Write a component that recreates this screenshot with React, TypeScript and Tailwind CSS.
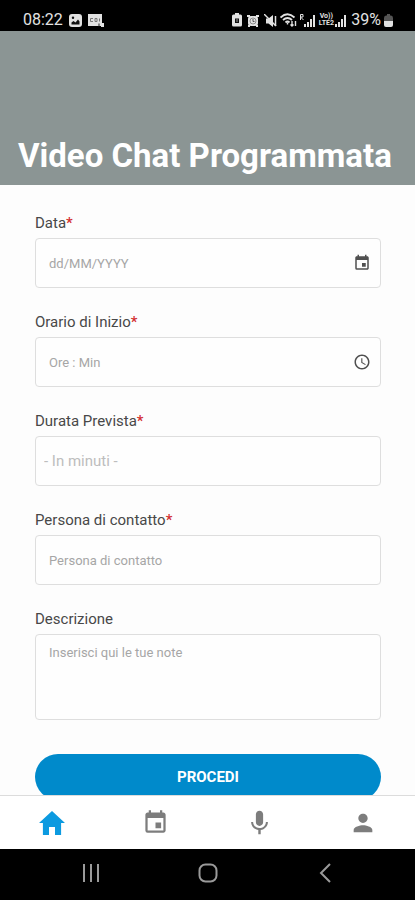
import type { ReactNode } from "react";
import { IoMdHome, IoMdMic } from "react-icons/io";
import { MdEvent, MdPerson, MdSchedule } from "react-icons/md";

const inputClass =
  "h-[50px] w-full rounded border border-[#dedede] bg-[#fefefe] px-[13px] text-[13px] text-[#444] placeholder:text-[#a6a6a6] outline-none";

function Signal() {
  return (
    <svg width="11" height="12" viewBox="0 0 11 12" fill="currentColor" aria-hidden="true">
      <rect x="0" y="9" width="2" height="3" />
      <rect x="3" y="7" width="2" height="5" />
      <rect x="6" y="4" width="2" height="8" />
      <rect x="9" y="0" width="2" height="12" />
    </svg>
  );
}

function StatusBar() {
  return (
    <header className="flex h-[31px] shrink-0 items-end justify-between bg-black pr-[22px] pl-[23px] text-[#e2e2e2]">
      <div className="flex h-[22px] items-center gap-1.5">
        <span className="text-base leading-[22px]">08:22</span>
        <svg width="13" height="13" viewBox="0 0 13 13" aria-hidden="true">
          <rect width="13" height="13" rx="3" fill="currentColor" />
          <path d="M2.500 10.500v-2L4.500 7l2 1.500 2.500-3 1.500 2v3z" fill="#111" />
          <circle cx="4" cy="3.800" r="1.200" fill="#111" />
        </svg>
        <svg width="16" height="13" viewBox="0 0 16 13" aria-hidden="true">
          <path d="M0 0h14v9h2v4h-3v-1H0z" fill="currentColor" />
          <path d="M2.500 7.500v-3h2.500M5 7.500H2.500M7 7.500v-3h2v3zM11.500 4.500v3" fill="none" stroke="#777" />
          <path d="M11 9.500v3" stroke="#222" />
        </svg>
      </div>
      <div className="flex h-[22px] items-center gap-[3px]">
        <div className="flex items-center gap-[5px]">
          <svg width="10" height="14" viewBox="0 0 10 14" aria-hidden="true">
            <path d="M3 0h4v1.500h1.500Q10 1.500 10 3v9q0 1.500-1.500 1.500h-7Q0 13.500 0 12V3q0-1.500 1.500-1.500H3z" fill="currentColor" />
            <path d="M3 5.500h4v4.500H3z" fill="#111" />
            <path d="M5 6v3" stroke="#999" />
          </svg>
          <svg width="12" height="13" viewBox="0 0 12 13" aria-hidden="true">
            <path d="M0 1h3v2H0zM9 1h3v2H9zM1 11h2v2H1zM9 11h2v2H9z" fill="currentColor" />
            <rect x="1" y="2" width="10" height="10" rx="3" fill="currentColor" />
            <circle cx="6" cy="7" r="3" fill="none" stroke="#777" strokeWidth=".8" />
            <path d="M6 5v2.500h1.500" fill="none" stroke="#555" />
          </svg>
          <svg width="13" height="13" viewBox="0 0 13 13" aria-hidden="true">
            <path d="M2 4.500h2.500L9 1v12L4.500 9.500H2z" fill="currentColor" />
            <path d="M11.500 2v10" stroke="currentColor" strokeWidth="1.500" />
            <path d="m0 0 12 12" stroke="currentColor" strokeWidth="1.400" />
          </svg>
        </div>
        <svg width="17" height="14" viewBox="0 0 17 14" fill="none" stroke="currentColor" strokeWidth="1.800" aria-hidden="true">
          <path d="M.5 4.500q7-6.500 14 0M3 7q4.500-4 9 0M5.500 9.500q2-2 4 0" />
          <path d="M7.500 9.500v2M12 8v5m-1.500-1.500L12 13l1.500-1.500M15.500 13V8" strokeWidth="1.400" />
        </svg>
        <div className="flex items-end">
          <svg width="4" height="13" viewBox="0 0 4 13" fill="none" stroke="currentColor" aria-hidden="true">
            <path d="M.5 6V.5H3V3H.5L3.500 6" />
          </svg>
          <Signal />
        </div>
        <div className="flex items-end gap-px">
          <div className="flex w-4 flex-col items-center text-[7px] leading-[7px] font-bold">
            <span>Vo))</span>
            <span>LTE2</span>
          </div>
          <Signal />
        </div>
        <div className="ml-0.5 flex items-center gap-[3px]">
          <span className="text-base leading-[22px]">39%</span>
          <svg width="9" height="13" viewBox="0 0 9 13" aria-hidden="true">
            <path d="M3 0h3v1.500h1Q9 1.500 9 4v3H0V4q0-2.500 2-2.500h1z" fill="#555" />
            <path d="M0 7h9v4q0 2-2 2H2q-2 0-2-2z" fill="currentColor" />
          </svg>
        </div>
      </div>
    </header>
  );
}

interface FieldProps {
  id: string;
  label: string;
  required?: boolean;
  children: ReactNode;
}

function Field({ id, label, required, children }: FieldProps) {
  return (
    <div className="flex flex-col gap-[5px]">
      <label htmlFor={id} className="text-[15px] leading-5 text-[#484848]">
        {label}
        {required && <span className="font-medium text-[#d32f2f]">*</span>}
      </label>
      {children}
    </div>
  );
}

const tabs = [
  { label: "Home", icon: <IoMdHome size={32} />, active: true },
  { label: "Calendario", icon: <MdEvent size={27} />, active: false },
  { label: "Messaggi vocali", icon: <IoMdMic size={27} />, active: false },
  { label: "Profilo", icon: <MdPerson size={28} />, active: false },
];

function TabBar() {
  return (
    <nav className="grid h-[54px] shrink-0 grid-cols-4 border-t border-[#dcdcdc] bg-white">
      {tabs.map((tab) => (
        <button
          key={tab.label}
          type="button"
          aria-label={tab.label}
          className={`flex items-center justify-center ${tab.active ? "text-[#0c9ae0]" : "text-[#7d7d7d]"}`}
        >
          {tab.icon}
        </button>
      ))}
    </nav>
  );
}

function SystemBar() {
  return (
    <footer className="grid h-[51px] shrink-0 grid-cols-3 bg-black px-8 pb-1 text-[#9a9a9a]">
      <button type="button" aria-label="Recenti" className="flex items-center justify-center">
        <svg width="18" height="18" viewBox="0 0 18 18" fill="none" stroke="currentColor" strokeWidth="2">
          <path d="M2 0v18M9 0v18M16 0v18" />
        </svg>
      </button>
      <button type="button" aria-label="Schermata iniziale" className="flex items-center justify-center">
        <svg width="20" height="20" viewBox="0 0 20 20" fill="none" stroke="currentColor" strokeWidth="2">
          <rect x="1.500" y="1.500" width="17" height="17" rx="6" />
        </svg>
      </button>
      <button type="button" aria-label="Indietro" className="flex items-center justify-center">
        <svg width="12" height="20" viewBox="0 0 12 20" fill="none" stroke="currentColor" strokeWidth="2">
          <path d="M11 1 2 10l9 9" />
        </svg>
      </button>
    </footer>
  );
}

export default function App() {
  return (
    <div className="flex h-screen flex-col bg-[#fdfdfd] font-[Roboto,sans-serif]">
      <StatusBar />

      <main className="min-h-0 flex-1 overflow-y-auto [scrollbar-width:none]">
        <div className="flex h-[154px] items-end bg-[#8b9594] px-[18px] pb-[9px]">
          <h1 className="text-[33px] leading-10 font-bold whitespace-nowrap text-white">
            Video Chat Programmata
          </h1>
        </div>

        <form className="flex flex-col gap-6 pt-7 pr-[34px] pb-8 pl-[35px]">
          <Field id="data" label="Data" required>
            <div className="relative">
              <input id="data" type="text" placeholder="dd/MM/YYYY" className={inputClass} />
              <button
                type="button"
                aria-label="Scegli la data"
                className="absolute inset-y-0 right-2.5 flex items-center text-[#505050]"
              >
                <MdEvent size={18} />
              </button>
            </div>
          </Field>

          <Field id="orario" label="Orario di Inizio" required>
            <div className="relative">
              <input id="orario" type="text" placeholder="Ore : Min" className={inputClass} />
              <button
                type="button"
                aria-label="Scegli l'orario"
                className="absolute inset-y-0 right-2.5 flex items-center text-[#505050]"
              >
                <MdSchedule size={18} />
              </button>
            </div>
          </Field>

          <Field id="durata" label="Durata Prevista" required>
            <select
              id="durata"
              className="h-[50px] w-full appearance-none rounded border border-[#dedede] bg-[#fefefe] px-2 text-[15px] text-[#bdbdbd] outline-none"
            >
              <option>- In minuti -</option>
            </select>
          </Field>

          <Field id="contatto" label="Persona di contatto" required>
            <input id="contatto" type="text" placeholder="Persona di contatto" className={inputClass} />
          </Field>

          <Field id="descrizione" label="Descrizione">
            <textarea
              id="descrizione"
              placeholder="Inserisci qui le tue note"
              className="block h-[86px] w-full resize-none rounded border border-[#dedede] bg-[#fefefe] px-[13px] py-2 text-[13px] leading-5 text-[#444] outline-none placeholder:text-[#a6a6a6]"
            />
          </Field>

          <button
            type="submit"
            className="mt-2.5 h-[46px] shrink-0 rounded-full bg-[#008acb] text-[15px] font-bold text-white"
          >
            PROCEDI
          </button>
        </form>
      </main>

      <TabBar />
      <SystemBar />
    </div>
  );
}
